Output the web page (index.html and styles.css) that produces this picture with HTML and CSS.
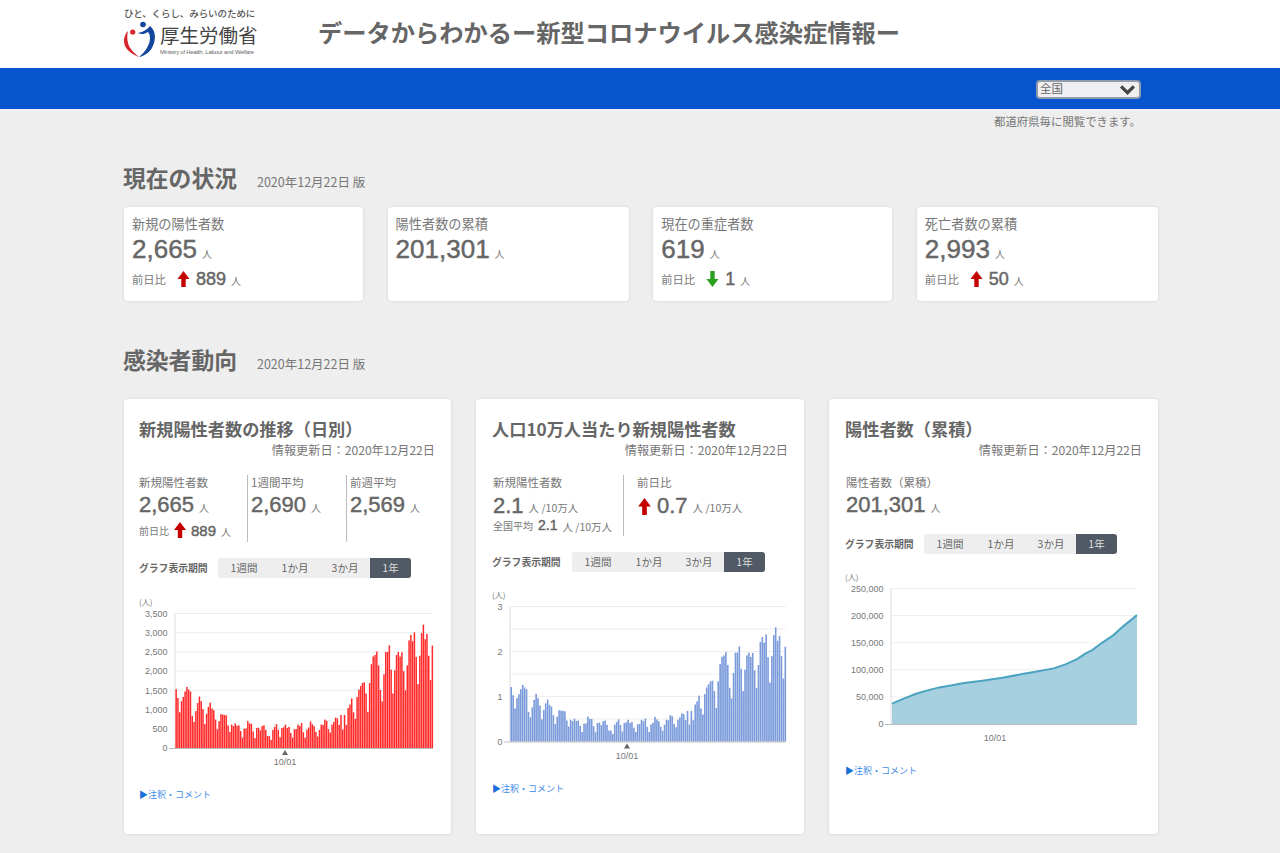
FILE: index.html
```html
<!DOCTYPE html>
<html lang="ja">
<head>
<meta charset="utf-8">
<title>データからわかるー新型コロナウイルス感染症情報ー</title>
<link rel="stylesheet" href="styles.css">
</head>
<body>
<header class="site-header">
  <div class="logo">
    <div class="logo-tag">ひと、くらし、みらいのために</div>
    <div class="logo-main">
      <svg class="logo-mark" viewBox="0 0 33 37" aria-hidden="true">
        <circle cx="9.700" cy="11" r="2.600" fill="#d8232a"/>
        <circle cx="20" cy="3.500" r="2.800" fill="#12479d"/>
        <path d="M5 10C1 14 0 20 2 25C5 31 11 34 16 36C11 32 6 27 5 22C4 18 4 14 5 10Z" fill="#d8232a"/>
        <path d="M15 12C20 11 25 8 27 5C32 9 33 16 31 22C29 30 22 35 16 36C22 31 27 24 27 17C27 14 26 12 25 11C22 13 18 14 15 12Z" fill="#12479d"/>
      </svg>
      <div class="logo-names">
        <div class="logo-ja">厚生労働省</div>
        <div class="logo-en">Ministry of Health, Labour and Welfare</div>
      </div>
    </div>
  </div>
  <h1 class="site-title">データからわかるー新型コロナウイルス感染症情報ー</h1>
</header>
<nav class="nav-bar">
  <div class="region-select">
    <span>全国</span>
    <svg class="chevron" viewBox="0 0 16 10" aria-hidden="true"><path d="M2 2l6 6 6-6" fill="none" stroke="#444" stroke-width="3"/></svg>
  </div>
</nav>
<p class="nav-note">都道府県毎に閲覧できます。</p>

<main class="content">
  <section class="section section-now">
    <div class="section-head">
      <h2>現在の状況</h2><span class="version">2020年12月22日 版</span>
    </div>
    <div class="kpi-grid">
      <article class="card kpi">
        <div class="kpi-label">新規の陽性者数</div>
        <div class="kpi-value"><b>2,665</b><small>人</small></div>
        <div class="kpi-diff"><span>前日比</span>
          <svg class="arrow up" viewBox="0 0 12 16" aria-hidden="true"><path d="M6 0l6 8H8.200v8H3.800V8H0z"/></svg>
          <b>889</b><small>人</small></div>
      </article>
      <article class="card kpi">
        <div class="kpi-label">陽性者数の累積</div>
        <div class="kpi-value"><b>201,301</b><small>人</small></div>
      </article>
      <article class="card kpi">
        <div class="kpi-label">現在の重症者数</div>
        <div class="kpi-value"><b>619</b><small>人</small></div>
        <div class="kpi-diff"><span>前日比</span>
          <svg class="arrow down" viewBox="0 0 12 16" aria-hidden="true"><path d="M6 16L0 8h3.800V0h4.400v8H12z"/></svg>
          <b>1</b><small>人</small></div>
      </article>
      <article class="card kpi">
        <div class="kpi-label">死亡者数の累積</div>
        <div class="kpi-value"><b>2,993</b><small>人</small></div>
        <div class="kpi-diff"><span>前日比</span>
          <svg class="arrow up" viewBox="0 0 12 16" aria-hidden="true"><path d="M6 0l6 8H8.200v8H3.800V8H0z"/></svg>
          <b>50</b><small>人</small></div>
      </article>
    </div>
  </section>

  <section class="section section-trend">
    <div class="section-head">
      <h2>感染者動向</h2><span class="version">2020年12月22日 版</span>
    </div>
    <div class="chart-grid">
      <article class="card chart-card">
        <h3>新規陽性者数の推移（日別）</h3>
        <div class="updated">情報更新日：2020年12月22日</div>
        <div class="stats stats-three">
          <div class="stat">
            <div class="stat-label">新規陽性者数</div>
            <div class="stat-value"><b>2,665</b><small>人</small></div>
            <div class="stat-diff"><span>前日比</span>
              <svg class="arrow up small-arrow" viewBox="0 0 12 16" aria-hidden="true"><path d="M6 0l6 8H8.200v8H3.800V8H0z"/></svg>
              <b>889</b><small>人</small></div>
          </div>
          <div class="stat stat-div">
            <div class="stat-label">1週間平均</div>
            <div class="stat-value"><b>2,690</b><small>人</small></div>
          </div>
          <div class="stat stat-div">
            <div class="stat-label">前週平均</div>
            <div class="stat-value"><b>2,569</b><small>人</small></div>
          </div>
        </div>
        <div class="period">
          <span class="period-label">グラフ表示期間</span>
          <div class="tabs"><span>1週間</span><span>1か月</span><span>3か月</span><span class="active">1年</span></div>
        </div>
        <svg class="chart" id="chart-daily" viewBox="0 0 297 190"></svg>
        <a class="note-link"><i>▶</i>注釈・コメント</a>
      </article>

      <article class="card chart-card">
        <h3>人口10万人当たり新規陽性者数</h3>
        <div class="updated">情報更新日：2020年12月22日</div>
        <div class="stats stats-two">
          <div class="stat">
            <div class="stat-label">新規陽性者数</div>
            <div class="stat-value tight"><b>2.1</b><small>人 /10万人</small></div>
            <div class="stat-sub"><span>全国平均</span><b>2.1</b><small>人 /10万人</small></div>
          </div>
          <div class="stat stat-div wide">
            <div class="stat-label">前日比</div>
            <div class="stat-value tight">
              <svg class="arrow up mid-arrow" viewBox="0 0 12 16" aria-hidden="true"><path d="M6 0l6 8H8.200v8H3.800V8H0z"/></svg>
              <b>0.7</b><small>人 /10万人</small></div>
          </div>
        </div>
        <div class="period">
          <span class="period-label">グラフ表示期間</span>
          <div class="tabs"><span>1週間</span><span>1か月</span><span>3か月</span><span class="active">1年</span></div>
        </div>
        <svg class="chart" id="chart-rate" viewBox="0 0 297 190"></svg>
        <a class="note-link"><i>▶</i>注釈・コメント</a>
      </article>

      <article class="card chart-card">
        <h3>陽性者数（累積）</h3>
        <div class="updated">情報更新日：2020年12月22日</div>
        <div class="stats stats-one">
          <div class="stat">
            <div class="stat-label">陽性者数（累積）</div>
            <div class="stat-value"><b>201,301</b><small>人</small></div>
          </div>
        </div>
        <div class="period">
          <span class="period-label">グラフ表示期間</span>
          <div class="tabs"><span>1週間</span><span>1か月</span><span>3か月</span><span class="active">1年</span></div>
        </div>
        <svg class="chart" id="chart-total" viewBox="0 0 297 190"></svg>
        <a class="note-link"><i>▶</i>注釈・コメント</a>
      </article>
    </div>
  </section>
</main>
<script src="charts.js"></script>
</body>
</html>
```
FILE: styles.css
```css
* { box-sizing: border-box; }
html, body { margin: 0; padding: 0; }
body {
  background: #eeeeee;
  color: #666;
  font-family: "Noto Sans CJK JP", "Liberation Sans", sans-serif;
  height: 853px;
  overflow: hidden;
}
.site-header {
  background: #fff;
  height: 68px;
  display: flex;
  align-items: center;
  padding-left: 123px;
}
.logo { width: 195px; flex: none; align-self: flex-start; padding-top: 7px; }
.logo-tag { font-size: 9.500px; line-height: 13px; color: #555; letter-spacing: -0.08px; margin-left: 1px; font-weight: 500; white-space: nowrap; }
.logo-main { display: flex; margin-top: 1px; }
.logo-mark { width: 33px; height: 37px; flex: none; }
.logo-names { margin-left: 4px; margin-top: 2px; }
.logo-ja { font-size: 19.500px; line-height: 24px; color: #444; white-space: nowrap; }
.logo-en { font-size: 6px; line-height: 9px; color: #666; letter-spacing: -0.22px; white-space: nowrap; font-family: "Liberation Sans", sans-serif; margin-top: 1px; }
.site-title { margin: 0; font-size: 24.250px; line-height: 34px; font-weight: 700; color: #666; white-space: nowrap; position: relative; top: -2px; }

.nav-bar {
  background: #0655cf;
  height: 41px;
  display: flex;
  justify-content: flex-end;
  align-items: flex-start;
  padding: 12px 139px 0 0;
}
.region-select {
  width: 105px;
  height: 19px;
  background: #efeff1;
  border: 2px solid #8f9aaa;
  border-radius: 4px;
  display: flex;
  justify-content: space-between;
  align-items: center;
  padding: 0 3px 0 2px;
  font-size: 11.500px;
  line-height: 14px;
  color: #666;
}
.region-select span { position: relative; top: -2px; }
.chevron { width: 17px; height: 11px; }
.nav-note { margin: 0; height: 24px; padding: 4px 139px 0 0; text-align: right; font-size: 11.400px; line-height: 16px; color: #777; }

.content { width: 1034px; margin-left: 124px; }
.section-now { margin-top: 30px; }
.section-trend { margin-top: 44px; }
.section-head { display: flex; align-items: baseline; height: 30px; margin-left: -1px; }
.section-now .section-head { margin-bottom: 14px; }
.section-trend .section-head { margin-bottom: 24px; }
h2 { margin: 0; font-size: 22.800px; line-height: 30px; font-weight: 700; color: #666; }
.version { margin-left: 20px; font-size: 12.500px; color: #777; }

.card { background: #fff; border-radius: 4px; box-shadow: 0 0 3px rgba(0, 0, 0, 0.12); }
.kpi-grid { display: grid; grid-template-columns: 239fr 241fr 239fr 241fr; gap: 24.500px; }
.kpi { height: 94px; padding: 7px 7.500px 0 8px; }
.kpi-label { font-size: 13.200px; line-height: 20px; color: #777; }
.kpi-value { height: 30px; line-height: 30px; white-space: nowrap; }
b { font-family: "Liberation Sans", sans-serif; font-weight: 400; -webkit-text-stroke: 0.45px #666; color: #666; }
small { font-size: 10px; color: #777; margin-left: 5px; }
.kpi-value b { font-size: 26px; }
.kpi-diff { height: 30px; display: flex; align-items: center; font-size: 11.300px; color: #777; white-space: nowrap; }
.kpi-diff b { font-size: 18px; margin-left: 6px; }
.kpi-diff small { margin-top: 3px; }
.arrow { width: 12px; height: 16px; flex: none; }
.arrow.up { fill: #c40000; margin-left: 11px; width: 13px; }
.arrow.down { fill: #28a01e; margin-left: 11px; width: 13px; }

.chart-grid { display: grid; grid-template-columns: 327fr 328fr 329fr; gap: 25px; }
.chart-card { height: 435px; padding: 17px 15px 0; }
.chart-card + .chart-card { padding-left: 16px; }
h3 { margin: 0; font-size: 17.200px; line-height: 26px; font-weight: 700; color: #666; white-space: nowrap; }
.updated { text-align: right; font-size: 12.150px; line-height: 16px; color: #777; margin-right: 1px; }
.stats { display: grid; margin-top: 17px; }
.stats-three { grid-template-columns: 108px 99px 1fr; height: 67px; }
.stats-two { grid-template-columns: 130px 1fr; height: 61px; padding-left: 1px; }
.stats-one { grid-template-columns: 1fr; height: 43px; padding-left: 1px; }
.stat { white-space: nowrap; }
.stat-div { border-left: 1px solid #bbb; padding-left: 3px; }
.stat-div.wide { padding-left: 13px; }
.stat-label { font-size: 11.500px; line-height: 16px; color: #777; margin: -1px 0 1px; }
.stat-value { height: 28px; line-height: 28px; display: flex; align-items: baseline; }
.stat-value b { font-size: 22px; }
.stats-two .stat-value { height: 22px; margin-top: 5px; align-items: center; }
.stats-two .stat-value small { margin-top: 4px; font-size: 10.500px; }
.mid-arrow { width: 13px; height: 17px; margin: 0 6px 0 1px !important; }
.stat-diff { height: 22px; display: flex; align-items: center; font-size: 10px; color: #777; }
.stat-diff b { font-size: 15px; margin-left: 5px; }
.stat-diff small { margin-top: 3px; }
.small-arrow { margin-left: 5px !important; width: 12px !important; }
.stat-sub { display: flex; align-items: center; height: 16px; font-size: 10px; color: #777; }
.stat-sub b { font-size: 14px; margin-left: 5px; }
.stat-sub small { margin-top: 2px; font-size: 10.500px; }
.period { display: flex; align-items: center; margin-top: 16px; height: 20px; }
.period-label { width: 79px; flex: none; font-size: 9.800px; font-weight: 700; color: #666; white-space: nowrap; }
.chart-card:nth-child(2) .period-label { width: 80px; }
.tabs { display: flex; height: 20px; width: 193px; background: #eeeeee; border-radius: 3px; overflow: hidden; font-size: 10.500px; line-height: 20px; color: #666; text-align: center; }
.tabs span { width: 50px; }
.tabs span:first-child { width: 52px; }
.tabs .active { width: 41px; background: #515a64; color: #ddd; }

.chart { display: block; width: 297px; height: 190px; margin-top: 12px; overflow: visible; font-family: "Liberation Sans", sans-serif; }
.chart text { font-size: 9px; fill: #777; }
.chart .unit { font-size: 8px; font-family: "Noto Sans CJK JP", sans-serif; }
.grid-line { stroke: #eeeeee; stroke-width: 1; }
.axis-line { stroke: #dddddd; stroke-width: 1; }
.base-line { stroke: #bbbbbb; stroke-width: 1; }
.bar-red { fill: #ff2a2a; }
.bar-blue { fill: #7b9bdb; }
.area-fill { fill: #a6d0e0; }
.area-line { fill: none; stroke: #4aa3bf; stroke-width: 2; }
.mark { fill: #666; }
.note-link { display: block; margin-top: 8px; font-size: 9px; line-height: 14px; color: #3d8be8; }
.note-link i { font-style: normal; color: #1a6fd8; }
```
FILE: charts.js
```js
var NS = 'http://www.w3.org/2000/svg';
var daily = [1530,1300,930,1220,1330,1470,1590,1520,1470,830,680,960,1170,1340,1220,1010,620,890,1070,1180,1030,980,740,490,700,880,870,860,850,590,420,610,570,640,580,590,440,270,500,510,700,640,630,430,260,520,530,460,570,590,470,310,310,210,470,550,620,470,280,520,540,610,520,550,390,270,490,490,610,570,650,410,270,480,530,690,620,570,420,300,470,610,600,740,710,490,400,610,680,790,770,600,860,480,860,600,1040,1130,1290,930,760,1330,1520,1610,1690,1710,1420,940,1690,2180,2380,2420,2510,2150,1510,1210,1920,2500,2500,2670,2040,1420,2020,2420,2500,2380,2490,2000,1500,2150,2800,2940,2780,3010,2370,1660,2400,2990,3210,2830,2970,2400,1770,2665];
var total = [[0,37500],[.05,47300],[.098,55900],[.145,62000],[.193,67600],[.24,71300],[.294,75500],[.369,79900],[.45,85400],[.532,92100],[.586,96400],[.66,102600],[.708,110000],[.755,119800],[.79,130200],[.817,136400],[.857,149900],[.904,164000],[.945,180600],[1,201000]];

function el(parent, name, attrs, text) {
  var node = document.createElementNS(NS, name);
  for (var key in attrs) node.setAttribute(key, attrs[key]);
  if (text) node.textContent = text;
  parent.appendChild(node);
  return node;
}

function frame(svg, o) {
  var n = o.labels.length - 1, steps = o.steps || n;
  for (var i = 0; i <= steps; i++) {
    var y = o.y0 + (o.yTop - o.y0) * i / steps;
    if (i > 0) el(svg, 'line', {x1: o.x0, x2: o.x1, y1: y, y2: y, 'class': 'grid-line'});
  }
  o.labels.forEach(function (label, i) {
    var y = o.y0 + (o.yTop - o.y0) * i / n;
    el(svg, 'text', {x: o.x0 - 7.5, y: y + 3.2, 'text-anchor': 'end'}, label);
  });
  el(svg, 'line', {x1: o.x0, x2: o.x0, y1: o.yTop, y2: o.y0, 'class': 'axis-line'});
  el(svg, 'text', {x: o.unitX, y: o.yTop - 9, 'class': 'unit'}, '(人)');
}

function finish(svg, o) {
  el(svg, 'line', {x1: o.x0 - 6, x2: o.x1, y1: o.y0 + 0.5, y2: o.y0 + 0.5, 'class': 'base-line'});
  if (o.mark) el(svg, 'path', {d: 'M' + (o.markX - 3) + ' ' + (o.y0 + 7) + 'h6l-3-5z', 'class': 'mark'});
  el(svg, 'text', {x: o.markX, y: o.y0 + 17, 'text-anchor': 'middle'}, '10/01');
}

function bars(id, o, maxValue, scale, cls) {
  var svg = document.getElementById(id);
  frame(svg, o);
  var step = (o.x1 - o.x0) / daily.length;
  daily.forEach(function (v, i) {
    var h = (v / scale) / maxValue * (o.y0 - o.yTop);
    el(svg, 'rect', {x: (o.x0 + 0.4 + i * step).toFixed(2), y: (o.y0 - h).toFixed(2), width: (step - 0.3).toFixed(2), height: h.toFixed(2), 'class': cls});
  });
  finish(svg, o);
}

function area(id, o) {
  var svg = document.getElementById(id);
  frame(svg, o);
  var pts = total.map(function (p) {
    var x = o.x0 + 1 + (o.x1 - o.x0 - 1) * p[0];
    var y = o.y0 - p[1] / 250000 * (o.y0 - o.yTop);
    return x.toFixed(1) + ',' + y.toFixed(1);
  });
  el(svg, 'polygon', {points: (o.x0 + 1) + ',' + o.y0 + ' ' + pts.join(' ') + ' ' + o.x1 + ',' + o.y0, 'class': 'area-fill'});
  el(svg, 'polyline', {points: pts.join(' '), 'class': 'area-line'});
  finish(svg, o);
}

bars('chart-daily', {x0: 36, x1: 294, y0: 158, yTop: 23.5, unitX: 0, markX: 146, mark: true,
  labels: ['0', '500', '1,000', '1,500', '2,000', '2,500', '3,000', '3,500']}, 3500, 1, 'bar-red');
bars('chart-rate', {x0: 18, x1: 294, y0: 157.5, yTop: 22.5, unitX: 0, markX: 135, mark: true, steps: 6,
  labels: ['0', '1', '2', '3']}, 3, 1265, 'bar-blue');
area('chart-total', {x0: 46, x1: 292, y0: 158, yTop: 22.5, unitX: 0, markX: 150, mark: false,
  labels: ['0', '50,000', '100,000', '150,000', '200,000', '250,000']});
```
